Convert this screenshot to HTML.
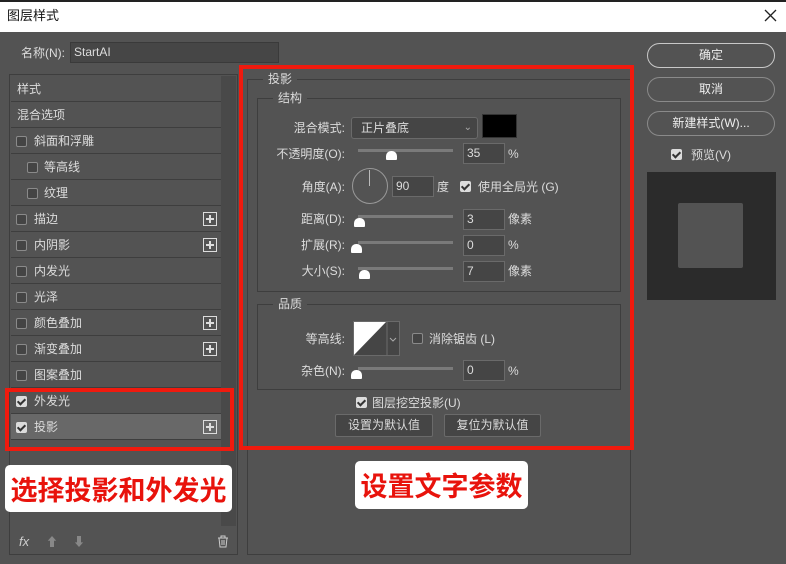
<!DOCTYPE html>
<html><head><meta charset="utf-8"><style>
*{box-sizing:border-box;margin:0;padding:0}
body{width:786px;height:564px;background:#535353;position:relative;overflow:hidden;font-family:"Liberation Sans","Noto Sans CJK SC",sans-serif;font-size:12px;color:#dcdcdc}
.a{position:absolute}
.t{position:absolute;white-space:nowrap;line-height:14px}
.row{position:absolute;left:11px;width:210px;height:26px;border-bottom:1px solid #3e3e3e}
.row span{position:absolute;top:6px;line-height:14px}
.cb{position:absolute;width:11px;height:11px;border:1px solid #8a8a8a;border-radius:2px;background:#444}
.cbk{position:absolute;width:11px;height:11px;border-radius:2px;background:#dcdcdc}
.cbk:after{content:"";position:absolute;left:3px;top:1px;width:3px;height:6px;border:solid #333;border-width:0 2px 2px 0;transform:rotate(45deg)}
.plus{position:absolute;left:192px;top:6px;width:14px;height:14px;border:1px solid #ddd}
.plus:before{content:"";position:absolute;left:2px;top:5px;width:8px;height:2px;background:#ddd}
.plus:after{content:"";position:absolute;left:5px;top:2px;width:2px;height:8px;background:#ddd}
.in{position:absolute;width:42px;height:21px;border:1px solid #6a6a6a;background:#454545;padding-left:3px;line-height:19px}
.tr{position:absolute;left:358px;width:95px;height:3px;background:#7a7a7a}
.th{position:absolute;width:11px;height:9px;background:#fff;border-radius:5px 5px 1px 1px}
.lb{position:absolute;text-align:right;width:100px;left:245px;line-height:14px}
.pill{position:absolute;left:647px;width:128px;height:25px;border:1px solid #8a8a8a;border-radius:13px;text-align:center;line-height:23px;color:#eee}
.btn{position:absolute;height:23px;border:1px solid #6a6a6a;background:#454545;border-radius:2px;text-align:center;line-height:21px;top:414px}
.big{position:absolute;background:#fff;border-radius:5px;color:#e8130c;font-weight:bold;font-size:27px;text-align:center;font-family:"Noto Sans CJK SC",sans-serif;white-space:nowrap}
</style></head><body>
<div class="a" style="left:0;top:0;width:786px;height:2px;background:#222"></div>
<div class="a" style="left:0;top:2px;width:786px;height:30px;background:#fff"></div>
<div class="t" style="left:7px;top:9px;color:#111;font-size:13px">图层样式</div>
<svg class="a" style="left:764px;top:9px" width="13" height="13"><path d="M1 1L12 12M12 1L1 12" stroke="#222" stroke-width="1.3"/></svg>

<div class="t" style="left:21px;top:46px">名称(N):</div>
<div class="a" style="left:70px;top:42px;width:209px;height:21px;border:1px solid #3a3a3a;background:#464646;padding-left:3px;line-height:19px">StartAI</div>

<div class="a" style="left:9px;top:74px;width:229px;height:481px;border:1px solid #3e3e3e"></div>
<div class="a" style="left:221px;top:76px;width:15px;height:450px;background:#494949"></div>
<div class="row" style="top:76px"><span style="left:6px">样式</span></div>
<div class="row" style="top:102px"><span style="left:6px">混合选项</span></div>
<div class="row" style="top:128px"><div class="cb" style="left:5px;top:8px"></div><span style="left:23px">斜面和浮雕</span></div>
<div class="row" style="top:154px"><div class="cb" style="left:16px;top:8px"></div><span style="left:33px">等高线</span></div>
<div class="row" style="top:180px"><div class="cb" style="left:16px;top:8px"></div><span style="left:33px">纹理</span></div>
<div class="row" style="top:206px"><div class="cb" style="left:5px;top:8px"></div><span style="left:23px">描边</span><div class="plus"></div></div>
<div class="row" style="top:232px"><div class="cb" style="left:5px;top:8px"></div><span style="left:23px">内阴影</span><div class="plus"></div></div>
<div class="row" style="top:258px"><div class="cb" style="left:5px;top:8px"></div><span style="left:23px">内发光</span></div>
<div class="row" style="top:284px"><div class="cb" style="left:5px;top:8px"></div><span style="left:23px">光泽</span></div>
<div class="row" style="top:310px"><div class="cb" style="left:5px;top:8px"></div><span style="left:23px">颜色叠加</span><div class="plus"></div></div>
<div class="row" style="top:336px"><div class="cb" style="left:5px;top:8px"></div><span style="left:23px">渐变叠加</span><div class="plus"></div></div>
<div class="row" style="top:362px"><div class="cb" style="left:5px;top:8px"></div><span style="left:23px">图案叠加</span></div>
<div class="row" style="top:388px"><div class="cbk" style="left:5px;top:8px"></div><span style="left:23px">外发光</span></div>
<div class="row" style="top:414px;background:#686868"><div class="cbk" style="left:5px;top:8px"></div><span style="left:23px">投影</span><div class="plus"></div></div>
<div class="a" style="left:5px;top:388px;width:229px;height:63px;border:4px solid #f01a0e"></div>
<div class="big" style="left:5px;top:465px;width:227px;height:47px;line-height:47px">选择投影和外发光</div>
<div class="t" style="left:19px;top:535px;font-style:italic;font-size:13px;color:#ccc">fx</div>
<div class="t" style="left:46px;top:535px;color:#888">⬆</div>
<div class="t" style="left:73px;top:535px;color:#888">⬇</div>
<svg class="a" style="left:217px;top:535px" width="12" height="13"><path d="M1 3H11M4 3V1H8V3M2 3L3 12H9L10 3M5 5V10M7 5V10" fill="none" stroke="#ccc"/></svg>

<div class="a" style="left:247px;top:79px;width:384px;height:476px;border:1px solid #3e3e3e"></div>
<div class="t" style="left:263px;top:72px;background:#535353;padding:0 5px">投影</div>
<div class="a" style="left:257px;top:98px;width:364px;height:194px;border:1px solid #3e3e3e"></div>
<div class="t" style="left:273px;top:91px;background:#535353;padding:0 5px">结构</div>
<div class="lb" style="top:121px">混合模式:</div>
<div class="a" style="left:351px;top:117px;width:127px;height:22px;border:1px solid #6a6a6a;border-radius:3px;background:#454545;padding-left:9px;line-height:20px">正片叠底<span style="position:absolute;right:5px;color:#aaa;font-size:10px">⌄</span></div>
<div class="a" style="left:482px;top:114px;width:35px;height:24px;background:#000;border:1px solid #333"></div>
<div class="lb" style="top:147px">不透明度(O):</div>
<div class="tr" style="top:149px"></div><div class="th" style="left:386px;top:151px"></div>
<div class="in" style="left:463px;top:143px">35</div><div class="t" style="left:508px;top:147px">%</div>
<div class="lb" style="top:180px">角度(A):</div>
<div class="a" style="left:352px;top:168px;width:36px;height:36px;border:1px solid #999;border-radius:50%"></div>
<div class="a" style="left:369px;top:170px;width:1px;height:16px;background:#bbb"></div>
<div class="in" style="left:392px;top:176px">90</div><div class="t" style="left:437px;top:180px">度</div>
<div class="cbk" style="left:460px;top:181px"></div><div class="t" style="left:478px;top:180px">使用全局光 (G)</div>
<div class="lb" style="top:212px">距离(D):</div>
<div class="tr" style="top:215px"></div><div class="th" style="left:354px;top:218px"></div>
<div class="in" style="left:463px;top:209px">3</div><div class="t" style="left:508px;top:212px">像素</div>
<div class="lb" style="top:238px">扩展(R):</div>
<div class="tr" style="top:241px"></div><div class="th" style="left:351px;top:244px"></div>
<div class="in" style="left:463px;top:235px">0</div><div class="t" style="left:508px;top:238px">%</div>
<div class="lb" style="top:264px">大小(S):</div>
<div class="tr" style="top:267px"></div><div class="th" style="left:359px;top:270px"></div>
<div class="in" style="left:463px;top:261px">7</div><div class="t" style="left:508px;top:264px">像素</div>

<div class="a" style="left:257px;top:304px;width:364px;height:86px;border:1px solid #3e3e3e"></div>
<div class="t" style="left:273px;top:297px;background:#535353;padding:0 5px">品质</div>
<div class="lb" style="top:332px">等高线:</div>
<svg class="a" style="left:353px;top:321px" width="47" height="35"><rect x="0.5" y="0.5" width="46" height="34" fill="#454545" stroke="#6a6a6a"/><polygon points="1,34 33,1 1,1" fill="#fff"/><line x1="34" y1="1" x2="34" y2="34" stroke="#6a6a6a"/><polyline points="37,17 40,20 43,17" fill="none" stroke="#aaa"/></svg>
<div class="cb" style="left:412px;top:333px"></div><div class="t" style="left:429px;top:332px">消除锯齿 (L)</div>
<div class="lb" style="top:364px">杂色(N):</div>
<div class="tr" style="top:367px"></div><div class="th" style="left:351px;top:370px"></div>
<div class="in" style="left:463px;top:360px">0</div><div class="t" style="left:508px;top:364px">%</div>
<div class="cbk" style="left:356px;top:397px"></div><div class="t" style="left:372px;top:396px">图层挖空投影(U)</div>
<div class="btn" style="left:335px;width:98px">设置为默认值</div>
<div class="btn" style="left:444px;width:97px">复位为默认值</div>
<div class="a" style="left:239px;top:65px;width:395px;height:385px;border:4px solid #f01a0e"></div>
<div class="big" style="left:355px;top:461px;width:173px;height:48px;line-height:48px">设置文字参数</div>

<div class="pill" style="top:43px;border-color:#c8c8c8">确定</div>
<div class="pill" style="top:77px">取消</div>
<div class="pill" style="top:111px">新建样式(W)...</div>
<div class="cbk" style="left:671px;top:149px"></div><div class="t" style="left:691px;top:148px">预览(V)</div>
<div class="a" style="left:647px;top:172px;width:129px;height:128px;background:#2b2b2b"></div>
<div class="a" style="left:678px;top:203px;width:65px;height:65px;background:#535353;border-radius:2px"></div>
</body></html>
